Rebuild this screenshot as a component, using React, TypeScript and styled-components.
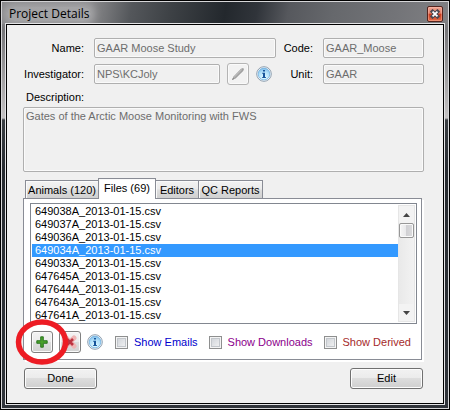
import React, { useState } from "react";
import styled, { createGlobalStyle, css } from "styled-components";

const GlobalStyle = createGlobalStyle`
  * { box-sizing: border-box; }
  body { margin: 0; background: #000; }
  button, input, textarea { font: inherit; margin: 0; }
`;

const Frame = styled.div`
  display: flex;
  flex-direction: column;
  min-height: 100vh;
  padding: 0 4px 4px;
  border: 1px solid #000;
  box-shadow: inset 0 0 0 1px #d6d6d8;
  background: linear-gradient(180deg, #8b8b8d 0, #77777a 30px, #c4c2c3 117px, #3a3e43 119px, #272b30 170px, #30343a 100%);
  font: 11px/13px "Liberation Sans", Arial, sans-serif;
  color: #000;
`;

const TitleBar = styled.header`
  display: flex;
  align-items: center;
  justify-content: space-between;
  height: 22px;
  margin: 1px -3px 0;
  padding: 2px 5px 0;
  background: linear-gradient(100deg, #89898b 0, #8a8a8c 20%, #54575b 29%, #3d4145 38%, #23282d 50%, #30343a 57%, #56585d 64%, #66686c 74%, #737478 88%, #808083 100%);
`;

const Title = styled.h1`
  margin: 0;
  padding: 0 2px;
  font: 12px/14px "Open Sans", "Noto Sans", sans-serif;
  color: #000;
  border-radius: 8px;
  background: rgba(190, 190, 192, 0.5);
  box-shadow: 0 0 7px 4px rgba(190, 190, 192, 0.5);
`;

const CloseButton = styled.button`
  display: grid;
  place-items: center;
  width: 16px;
  height: 16px;
  padding: 0;
  border: 1px solid #54241e;
  border-radius: 2px;
  background: linear-gradient(#efa593 0, #e07c66 45%, #c8371a 50%, #e26c48 100%);
  box-shadow: inset 0 0 0 1px rgba(255, 200, 185, 0.4);
`;

const Body = styled.main`
  flex: 1;
  padding: 13px 19px 13px 16px;
  margin: 0 1px 1px;
  border: 1px solid #000;
  outline: 1px solid #e4e4e6;
  background: #f0f0f0;
`;

const Fields = styled.div`
  display: grid;
  grid-template-columns: 61px 1fr 27px 101px;
  grid-template-rows: 20px 22px;
  gap: 5px 10px;
  align-items: center;
`;

const FieldLabel = styled.label`
  justify-self: end;
  white-space: nowrap;
`;

const disabledBox = css`
  display: block;
  width: 100%;
  min-width: 0;
  border: 1px solid #afafaf;
  border-radius: 2px;
  background: #f0f0f0;
  box-shadow: inset 0 0 0 1px #fafafa;
  color: #6d6d6d;
`;

const TextBox = styled.input`
  ${disabledBox}
  height: 20px;
  padding: 0 2px;
`;

const InvestigatorCell = styled.div`
  display: flex;
  align-items: center;
  gap: 7px;
  padding-right: 4px;
`;

const DescriptionLabel = styled.label`
  display: block;
  margin: 6px 0 3px 3px;
`;

const DescriptionBox = styled.textarea`
  ${disabledBox}
  height: 65px;
  padding: 2px;
  resize: none;
`;

const IconButton = styled.button<{ $faded?: boolean }>`
  position: relative;
  flex: none;
  display: grid;
  place-items: center;
  width: 22px;
  height: 22px;
  padding: 0;
  border: 1px solid ${(p) => (p.$faded ? "#b4b4b4" : "#808080")};
  border-radius: 3px;
  background: ${(p) => (p.$faded ? "#f2f2f2" : "linear-gradient(#f3f3f3 0, #ececec 48%, #dedede 50%, #d2d2d2 100%)")};
  box-shadow: inset 0 0 0 1px #fafafa;
`;

const InfoButton = styled.button`
  flex: none;
  display: block;
  width: 16px;
  height: 16px;
  padding: 0;
  border: 0;
  background: none;
`;

const TabList = styled.div`
  display: flex;
  align-items: flex-end;
  height: 20px;
  margin: 6px 0 0 2px;
`;

const Tab = styled.button<{ $active: boolean; $width: number }>`
  position: relative;
  width: ${(p) => p.$width}px;
  height: 18px;
  padding: 2px 0 0;
  border: 1px solid #898c95;
  border-bottom: 0;
  margin-left: -1px;
  white-space: nowrap;
  color: #000;
  background: linear-gradient(#f3f3f3 0, #ebebeb 48%, #dddddd 52%, #d0d0d0 100%);
  box-shadow: inset 1px 1px 0 #fafafa;
  ${(p) =>
    p.$active &&
    css`
      z-index: 1;
      height: 21px;
      margin-bottom: -1px;
      padding: 0 0 2px;
      background: #fff;
    `}
  &:first-child {
    margin-left: 0;
  }
`;

const Panel = styled.section`
  margin-right: 2px;
  padding: 4px 4px 6px 6px;
  border: 1px solid #898c95;
  background: #fff;
  box-shadow: 2px 2px 0 #fff;
`;

const ListFrame = styled.div`
  display: flex;
  height: 121px;
  padding: 1px;
  border: 1px solid #828790;
`;

const FileList = styled.ul`
  flex: 1;
  margin: 0;
  padding: 0;
  overflow: hidden;
  list-style: none;
`;

const FileItem = styled.li<{ $selected: boolean }>`
  height: 13px;
  padding-left: 3px;
  color: ${(p) => (p.$selected ? "#fff" : "#000")};
  background: ${(p) => (p.$selected ? "#3399ff" : "transparent")};
  cursor: default;
`;

const ScrollTrack = styled.div`
  display: flex;
  flex-direction: column;
  align-items: center;
  width: 17px;
  border: 1px solid #e6e6e6;
  background: linear-gradient(90deg, #e9e9e9, #f2f2f2);
`;

const ScrollArrow = styled.button`
  display: grid;
  place-items: center;
  width: 15px;
  height: 17px;
  padding: 0;
  border: 0;
  background: #f3f3f3;
`;

const ScrollThumb = styled.div`
  width: 15px;
  height: 15px;
  margin-bottom: auto;
  border: 1px solid #979797;
  border-radius: 2px;
  background: linear-gradient(90deg, #f5f5f5 0, #e9e9eb 45%, #d0d0d3 50%, #dcdcde 100%);
  box-shadow: inset 0 0 0 1px #fafafa;
`;

const Toolbar = styled.div`
  display: flex;
  align-items: center;
  padding: 7px 0 0 1px;
`;

const ToolButtons = styled.div`
  display: flex;
  align-items: center;
  gap: 6px;
  margin-right: 12px;
`;

const Filters = styled.div`
  display: flex;
  flex: 1;
  justify-content: space-between;
  padding-right: 6px;
`;

const FilterLabel = styled.label<{ $color: string }>`
  display: flex;
  align-items: center;
  gap: 6px;
  white-space: nowrap;
  color: ${(p) => p.$color};
`;

const CheckBox = styled.input`
  appearance: none;
  width: 13px;
  height: 13px;
  border: 1px solid #8e8f8f;
  background: linear-gradient(135deg, #cbcfd5, #f6f6f6);
  box-shadow: inset 0 0 0 1px #f4f4f4, inset 0 0 0 2px #c3c7cc;
  &:checked {
    background: #4b6098;
  }
`;

const Footer = styled.footer`
  display: flex;
  justify-content: space-between;
  margin-top: 8px;
  padding: 0 1px;
`;

const PushButton = styled.button`
  width: 73px;
  height: 21px;
  padding: 0;
  border: 1px solid #707070;
  border-radius: 3px;
  color: #000;
  background: linear-gradient(#f2f2f2 0, #ebebeb 48%, #dddddd 50%, #cfcfcf 100%);
  box-shadow: inset 0 0 0 1px #fcfcfc;
`;

const Highlight = styled.svg`
  position: absolute;
  z-index: 2;
  left: -17px;
  top: -14px;
  pointer-events: none;
`;

const InfoIcon = ({ id }: { id: string }) => (
  <svg width="16" height="16" viewBox="0 0 16 16" aria-hidden="true">
    <defs>
      <radialGradient id={id} cx="0.5" cy="0.8" r="0.8">
        <stop offset="0" stopColor="#e4faff" />
        <stop offset="0.6" stopColor="#b3e1fa" />
        <stop offset="1" stopColor="#7dbbe8" />
      </radialGradient>
    </defs>
    <circle cx="8" cy="8" r="7.3" fill="#fff" stroke="#8d9eae" />
    <circle cx="8" cy="8" r="5.9" fill={`url(#${id})`} stroke="#6eaede" strokeWidth="0.8" />
    <path d="M7 4h2v1.6H7zM6.2 6.8H9v4.3h.9v.9H6.2v-.9H7V7.7h-.8z" fill="#17559b" />
  </svg>
);

const PencilIcon = () => (
  <svg width="14" height="14" viewBox="0 0 14 14" aria-hidden="true">
    <path d="M1 13l1.5-3.6L10 1.8l2-.8 1 1-.8 2-7.6 7.6z" fill="#a0a0a0" />
    <path d="M3.2 10.2l7.6-7.6" stroke="#c9c9c9" />
    <path d="M1 13l1-2 1 1z" fill="#777" />
  </svg>
);

const PlusIcon = () => (
  <svg width="12" height="12" viewBox="0 0 12 12" aria-hidden="true">
    <path d="M4.7.8h2.6v3.9h3.9v2.6H7.3v3.9H4.7V7.3H.8V4.7h3.9z" fill="#4aa02c" stroke="#24701a" strokeWidth="0.9" />
  </svg>
);

const DeleteIcon = () => (
  <svg width="14" height="14" viewBox="0 0 14 14" aria-hidden="true">
    <path d="M3 3l8 8M11 3l-8 8" stroke="#efb5b5" strokeWidth="5" strokeLinecap="round" />
    <path d="M4 4l6 6M10 4l-6 6" stroke="#bd3340" strokeWidth="2.6" />
  </svg>
);

const CloseIcon = () => (
  <svg width="10" height="10" viewBox="0 0 9 9" aria-hidden="true">
    <path d="M2.3 2.3l4.4 4.4M6.7 2.3L2.3 6.7" stroke="#4b4750" strokeWidth="3.4" strokeLinecap="square" />
    <path d="M2.3 2.3l4.4 4.4M6.7 2.3L2.3 6.7" stroke="#fff" strokeWidth="1.6" />
  </svg>
);

const Arrow = ({ down }: { down?: boolean }) => (
  <svg width="7" height="4" viewBox="0 0 7 4" aria-hidden="true">
    <path d={down ? "M0 0h7L3.5 4z" : "M0 4h7L3.5 0z"} fill="#444" />
  </svg>
);

const tabs = [
  { name: "Animals (120)", width: 74 },
  { name: "Files (69)", width: 58 },
  { name: "Editors", width: 44 },
  { name: "QC Reports", width: 65 },
];

const files = ["649038A", "649037A", "649036A", "649034A", "649033A", "647645A", "647644A", "647643A", "647641A"].map(
  (id) => `${id}_2013-01-15.csv`
);

const filters = [
  { name: "Show Emails", color: "#0000cd" },
  { name: "Show Downloads", color: "#8b008b" },
  { name: "Show Derived", color: "#a52a2a" },
];

export default function App() {
  const [tab, setTab] = useState("Files (69)");
  const [selected, setSelected] = useState(files[3]);

  return (
    <>
      <GlobalStyle />
      <Frame>
        <TitleBar>
          <Title>Project Details</Title>
          <CloseButton aria-label="Close">
            <CloseIcon />
          </CloseButton>
        </TitleBar>
        <Body>
          <Fields>
            <FieldLabel htmlFor="name">Name:</FieldLabel>
            <TextBox id="name" disabled defaultValue="GAAR Moose Study" />
            <FieldLabel htmlFor="code">Code:</FieldLabel>
            <TextBox id="code" disabled defaultValue="GAAR_Moose" />
            <FieldLabel htmlFor="investigator">Investigator:</FieldLabel>
            <InvestigatorCell>
              <TextBox id="investigator" disabled defaultValue="NPS\KCJoly" />
              <IconButton $faded disabled aria-label="Edit investigator">
                <PencilIcon />
              </IconButton>
              <InfoButton aria-label="Investigator info">
                <InfoIcon id="info-investigator" />
              </InfoButton>
            </InvestigatorCell>
            <FieldLabel htmlFor="unit">Unit:</FieldLabel>
            <TextBox id="unit" disabled defaultValue="GAAR" />
          </Fields>
          <DescriptionLabel htmlFor="description">Description:</DescriptionLabel>
          <DescriptionBox id="description" disabled defaultValue="Gates of the Arctic Moose Monitoring with FWS" />

          <TabList role="tablist">
            {tabs.map((t) => (
              <Tab
                key={t.name}
                role="tab"
                aria-selected={t.name === tab}
                $active={t.name === tab}
                $width={t.width}
                onClick={() => setTab(t.name)}
              >
                {t.name}
              </Tab>
            ))}
          </TabList>
          <Panel role="tabpanel" aria-label={tab}>
            <ListFrame>
              <FileList role="listbox" aria-label="Files">
                {files.map((f) => (
                  <FileItem
                    key={f}
                    role="option"
                    aria-selected={f === selected}
                    $selected={f === selected}
                    onClick={() => setSelected(f)}
                  >
                    {f}
                  </FileItem>
                ))}
              </FileList>
              <ScrollTrack>
                <ScrollArrow aria-label="Scroll up">
                  <Arrow />
                </ScrollArrow>
                <ScrollThumb />
                <ScrollArrow aria-label="Scroll down">
                  <Arrow down />
                </ScrollArrow>
              </ScrollTrack>
            </ListFrame>
            <Toolbar>
              <ToolButtons>
                <IconButton aria-label="Add file">
                  <PlusIcon />
                  <Highlight width="54" height="48" viewBox="0 0 54 48" aria-hidden="true">
                    <ellipse cx="27" cy="24" rx="23.5" ry="20" fill="none" stroke="#ed1c24" strokeWidth="5.5" />
                  </Highlight>
                </IconButton>
                <IconButton aria-label="Delete file">
                  <DeleteIcon />
                </IconButton>
                <InfoButton aria-label="File info">
                  <InfoIcon id="info-file" />
                </InfoButton>
              </ToolButtons>
              <Filters>
                {filters.map((f) => (
                  <FilterLabel key={f.name} $color={f.color}>
                    <CheckBox type="checkbox" />
                    {f.name}
                  </FilterLabel>
                ))}
              </Filters>
            </Toolbar>
          </Panel>
          <Footer>
            <PushButton>Done</PushButton>
            <PushButton>Edit</PushButton>
          </Footer>
        </Body>
      </Frame>
    </>
  );
}
